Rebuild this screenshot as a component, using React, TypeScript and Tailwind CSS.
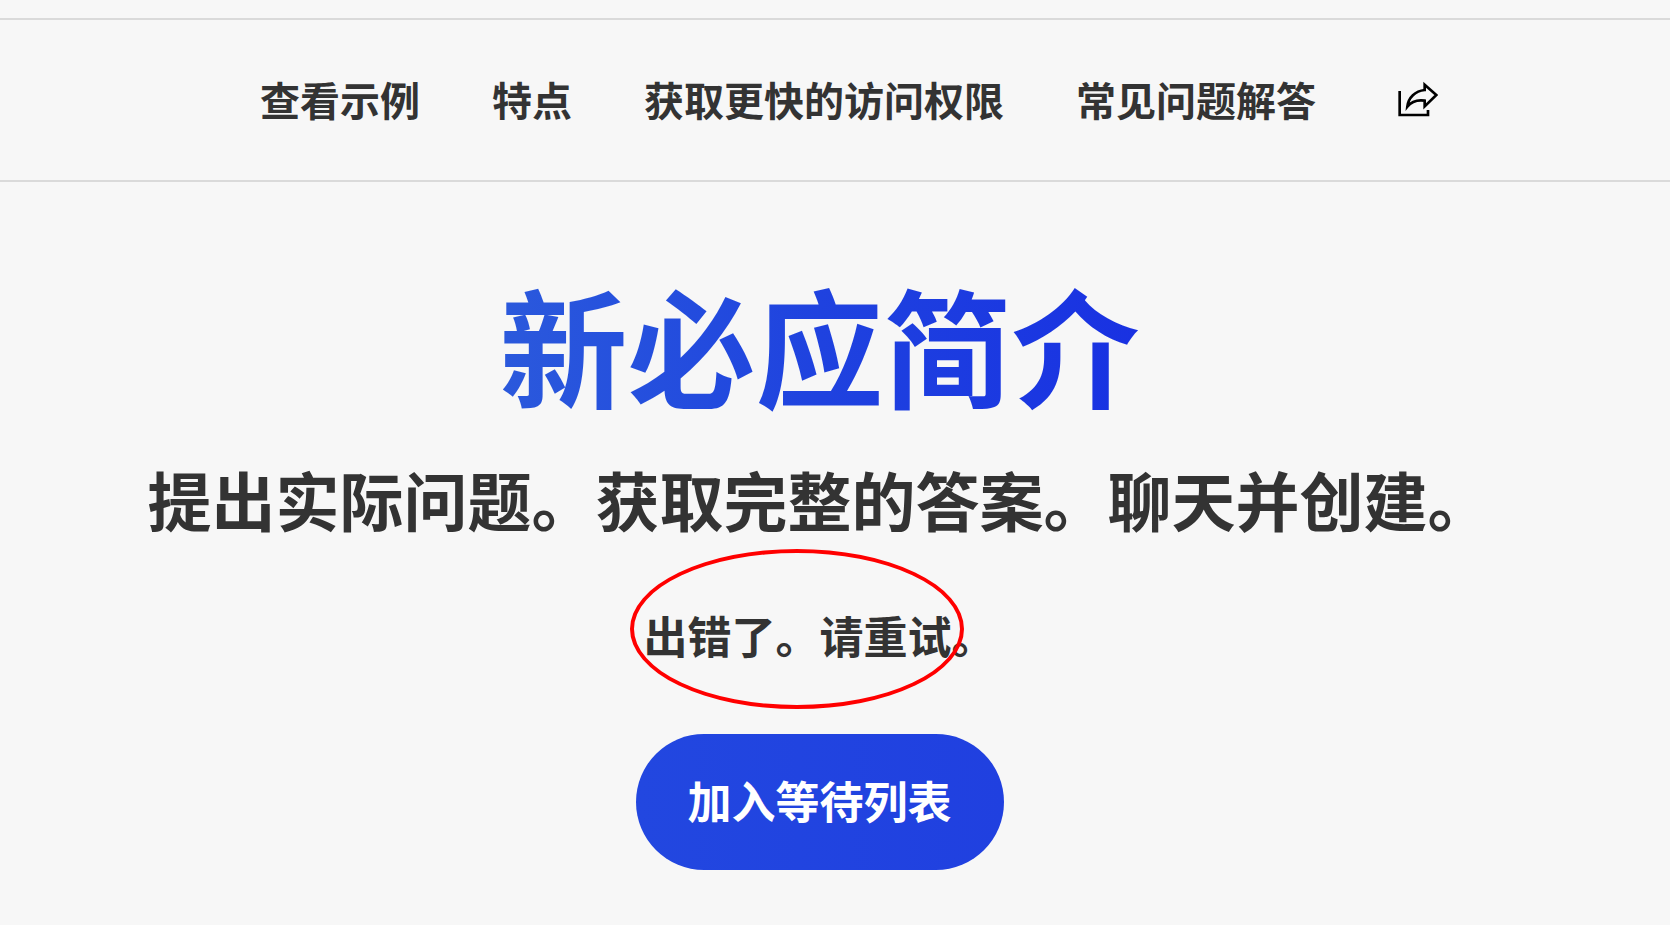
import React from "react";

const NAV_LINKS = [
  { label: "查看示例", href: "#examples" },
  { label: "特点", href: "#features" },
  { label: "获取更快的访问权限", href: "#access" },
  { label: "常见问题解答", href: "#faq" },
];

const ShareIcon = () => (
  <svg
    viewBox="0 0 120 108"
    className="w-10 h-9"
    fill="none"
    stroke="#000"
    strokeWidth={8}
    aria-hidden="true"
  >
    <path d="M5 30V102H90V87" />
    <path d="M80 11L115 42L80 76V59C58 56 40 62 28 77C31 50 52 30 80 27Z" />
  </svg>
);

const NavBar = () => {
  return (
    <nav className="flex justify-center items-center border-y-2 border-[#dadada] pl-7 pt-[49px] pb-[51px]">
      <ul className="flex items-center gap-[72px] text-[40px] leading-[60px] font-bold">
        {NAV_LINKS.map((link) => (
          <li key={link.href}>
            <a href={link.href}>{link.label}</a>
          </li>
        ))}
      </ul>
      <button type="button" aria-label="分享" className="ml-[82px]">
        <ShareIcon />
      </button>
    </nav>
  );
};

const HeroSection = () => {
  return (
    <main className="flex flex-col items-center pt-[82px] pr-[31px] pb-14">
      <h1 className="text-[128px] leading-[160px] font-bold bg-linear-to-r from-[#2b59dc] via-[#1f42df] via-50% to-[#1931e2] bg-clip-text text-transparent">
        新必应简介
      </h1>
      <h2 className="mt-[34px] text-[64px] leading-[80px] font-bold">
        提出实际问题。获取完整的答案。聊天并创建。
      </h2>
      <div className="relative mt-[69px]">
        <p role="alert" className="text-[44px] leading-[56px] font-bold">
          出错了。请重试。
        </p>
        <span className="absolute -left-[14px] -top-[58px] w-[334px] h-40 rounded-[50%] border-4 border-[#ff0000] pointer-events-none" />
      </div>
      <button
        type="button"
        className="mt-[71px] px-[52px] pt-[38px] pb-[42px] rounded-full bg-linear-to-r from-[#2247e0] to-[#2040e0] text-white text-[44px] leading-[56px] font-bold"
      >
        加入等待列表
      </button>
    </main>
  );
};

const App = () => {
  return (
    <div
      lang="zh-CN"
      className="min-h-screen bg-[#f7f7f7] text-[#333333] pt-[18px] font-['Noto_Sans_CJK_SC',sans-serif]"
    >
      <NavBar />
      <HeroSection />
    </div>
  );
};

export default App;
